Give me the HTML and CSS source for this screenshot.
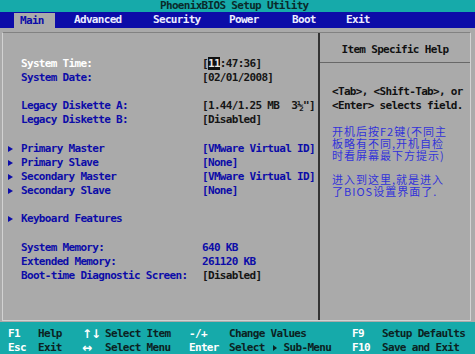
FILE: index.html
```html
<!DOCTYPE html>
<html lang="en">
<head>
<meta charset="utf-8">
<title>PhoenixBIOS Setup Utility</title>
<link rel="stylesheet" href="styles.css">
</head>
<body>
<div class="screen">
  <div class="title">PhoenixBIOS Setup Utility</div>
  <div class="menubar">
    <span class="tab active">Main</span>
    <span class="tab">Advanced</span>
    <span class="tab">Security</span>
    <span class="tab">Power</span>
    <span class="tab">Boot</span>
    <span class="tab">Exit</span>
  </div>
  <div class="main">
    <div class="frame">
      <div class="left">
        <div class="row"><span class="mark"></span><span class="label hi">System Time:</span><span class="val dark">[<span class="cursor">11</span>:47:36]</span></div>
        <div class="row"><span class="mark"></span><span class="label">System Date:</span><span class="val dark">[02/01/2008]</span></div>
        <div class="blank"></div>
        <div class="row"><span class="mark"></span><span class="label">Legacy Diskette A:</span><span class="val dark">[1.44/1.25 MB  3½"]</span></div>
        <div class="row"><span class="mark"></span><span class="label">Legacy Diskette B:</span><span class="val dark">[Disabled]</span></div>
        <div class="blank"></div>
        <div class="row"><span class="mark"><i class="arrow"></i></span><span class="label">Primary Master</span><span class="val">[VMware Virtual ID]</span></div>
        <div class="row"><span class="mark"><i class="arrow"></i></span><span class="label">Primary Slave</span><span class="val">[None]</span></div>
        <div class="row"><span class="mark"><i class="arrow"></i></span><span class="label">Secondary Master</span><span class="val">[VMware Virtual ID]</span></div>
        <div class="row"><span class="mark"><i class="arrow"></i></span><span class="label">Secondary Slave</span><span class="val">[None]</span></div>
        <div class="blank"></div>
        <div class="row"><span class="mark"><i class="arrow"></i></span><span class="label">Keyboard Features</span><span class="val"></span></div>
        <div class="blank"></div>
        <div class="row"><span class="mark"></span><span class="label">System Memory:</span><span class="val">640 KB</span></div>
        <div class="row"><span class="mark"></span><span class="label">Extended Memory:</span><span class="val">261120 KB</span></div>
        <div class="row"><span class="mark"></span><span class="label">Boot-time Diagnostic Screen:</span><span class="val dark">[Disabled]</span></div>
      </div>
      <div class="right">
        <div class="help-head">Item Specific Help</div>
        <div class="help-body">
          <div class="line">&lt;Tab&gt;, &lt;Shift-Tab&gt;, or</div>
          <div class="line">&lt;Enter&gt; selects field.</div>
          <div class="cn">
            <div>开机后按F2键(不同主</div>
            <div>板略有不同,开机自检</div>
            <div>时看屏幕最下方提示)</div>
          </div>
          <div class="cn">
            <div>进入到这里,就是进入</div>
            <div>了BIOS设置界面了.</div>
          </div>
        </div>
      </div>
    </div>
  </div>
  <div class="footer">
    <span class="key">F1</span><span>Help</span><span class="key arr">↑↓</span><span>Select Item</span><span class="key">-/+</span><span>Change Values</span><span class="key">F9</span><span>Setup Defaults</span>
    <span class="key">Esc</span><span>Exit</span><span class="key arr">↔</span><span>Select Menu</span><span class="key">Enter</span><span>Select <i class="tri"></i>Sub-Menu</span><span class="key">F10</span><span>Save and Exit</span>
  </div>
</div>
</body>
</html>
```
FILE: styles.css
```css
body {
  margin: 0;
  background: #aaaaaa;
}

.screen {
  --row: 14.16px;
  --blue: #0c0ca8;
  --gray: #aaaaaa;
  --teal: #16aaaa;
  width: 475px;
  height: 354px;
  overflow: hidden;
  display: flex;
  flex-direction: column;
  background: var(--gray);
  font-family: "DejaVu Sans Mono", monospace;
  font-weight: bold;
  font-size: 11px;
  letter-spacing: -0.68px;
}

.title {
  height: 12px;
  line-height: 12px;
  background: var(--teal);
  color: #0a2a2a;
  padding-left: 160px;
  white-space: nowrap;
}

.menubar {
  height: 16px;
  background: var(--blue);
  padding-left: 14px;
  display: grid;
  grid-template-columns: 60px 79px 76px 63px 54px auto;
  align-items: start;
}

.tab {
  color: #ececff;
  line-height: 16px;
  white-space: nowrap;
}

.tab.active {
  justify-self: start;
  background: var(--gray);
  color: var(--blue);
  margin-top: 1px;
  line-height: 15px;
  padding: 0 11px 0 6px;
}

.main {
  flex: 1;
  padding: 4px 4px 1px 2px;
  min-height: 0;
}

.frame {
  height: 100%;
  box-sizing: border-box;
  border: 1px solid #d2d2d2;
  border-top-color: #828282;
  display: grid;
  grid-template-columns: 315px 1fr;
}

.left {
  padding: 23.6px 0 0 5px;
}

.row {
  display: grid;
  grid-template-columns: 13px 181px auto;
  height: var(--row);
  line-height: var(--row);
  color: var(--blue);
}

.label,
.val {
  white-space: pre;
}

.blank {
  height: var(--row);
}

.mark {
  display: flex;
  align-items: center;
}

.arrow {
  display: block;
  width: 0;
  height: 0;
  border-left: 5px solid var(--blue);
  border-top: 3.5px solid transparent;
  border-bottom: 3.5px solid transparent;
}

.label.hi {
  color: #ffffff;
}

.val.dark {
  color: #151515;
}

.cursor {
  background: #111111;
  color: #e6e6e6;
}

.right {
  border-left: 2px solid #333333;
}

.help-head {
  height: 30px;
  box-sizing: border-box;
  padding-top: 9.5px;
  line-height: var(--row);
  text-align: center;
  color: #111111;
  border-bottom: 1px solid #686868;
  white-space: nowrap;
}

.help-body {
  padding: 22px 0 0 12px;
}

.line {
  height: var(--row);
  line-height: var(--row);
  color: #111111;
  white-space: nowrap;
}

.cn {
  margin-top: 11.7px;
  font-family: "Noto Sans CJK SC", sans-serif;
  font-weight: normal;
  font-size: 11px;
  letter-spacing: 1px;
  line-height: 12px;
  color: #3232da;
  white-space: nowrap;
}

.cn + .cn {
  margin-top: 12px;
}

.footer {
  height: 32px;
  box-sizing: border-box;
  background: var(--teal);
  padding: 5px 0 0 8px;
  display: grid;
  grid-template-columns: 30px 44px 23px 84px 40px 123px 30px 1fr;
  grid-auto-rows: 14px;
  line-height: 14px;
  color: #0c2222;
  white-space: nowrap;
}

.key {
  color: #ffffff;
}

.key.arr {
  font-family: "DejaVu Sans", sans-serif;
  font-size: 12px;
  letter-spacing: -1px;
}

.tri {
  display: inline-block;
  width: 0;
  height: 0;
  border-left: 4px solid #0c2222;
  border-top: 3px solid transparent;
  border-bottom: 3px solid transparent;
  margin: 0 7px 0 2px;
  vertical-align: 0;
}
```
